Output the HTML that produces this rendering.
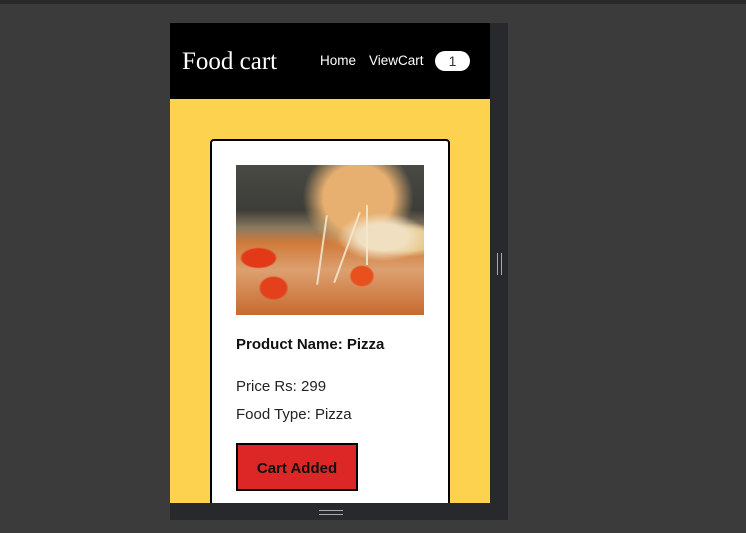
<!DOCTYPE html>
<html><head><style>
body{margin:0;width:746px;height:533px;background:#3b3b3b;position:relative;overflow:hidden;font-family:"Liberation Sans",sans-serif}
.top{position:absolute;left:0;top:0;width:746px;height:4px;background:#2a2a2a}
.frame{position:absolute;left:170px;top:23px;width:338px;height:497px;background:#28292c}
.vp{position:absolute;left:170px;top:23px;width:320px;height:480px;background:#fdd24e;overflow:hidden}
.hdr{position:absolute;left:0;top:0;width:320px;height:76px;background:#000}
.logo{position:absolute;left:12px;top:25px;color:#fff;font-family:"Liberation Serif",serif;font-size:25px}
.nav{position:absolute;top:30px;color:#fff;font-size:13.5px}
.badge{position:absolute;left:265px;top:28px;width:35px;height:20px;background:#fff;border-radius:10px;text-align:center;font-size:14px;line-height:20px;color:#333}
.card{position:absolute;left:40px;top:116px;width:236px;height:380px;background:#fff;border:2px solid #000;border-radius:4px}
.img{position:absolute;left:24px;top:24px;width:188px;height:150px;overflow:hidden;background:
radial-gradient(ellipse at 12% 62%,#e23a18 0 7%,transparent 8%),
radial-gradient(ellipse at 67% 74%,#e8501e 0 6%,transparent 7%),
radial-gradient(ellipse at 20% 82%,#e4401b 0 6%,transparent 7%),
radial-gradient(ellipse at 78% 48%,#f0dfc0 0 12%,transparent 22%),
radial-gradient(ellipse at 65% 22%,#e8b070 0 20%,transparent 32%),
radial-gradient(ellipse at 92% 50%,#e8c88a 0 10%,transparent 16%),
linear-gradient(180deg,#4a4a44 0,#3c3d38 30%,#8a7a60 42%,#d07a3a 52%,#dca070 70%,#c86a30 100%)}
.str{position:absolute;width:2px;background:#f3ead0;opacity:.85}
.t{position:absolute;left:24px;font-size:15px;color:#222}
.btn{position:absolute;left:24px;top:302px;width:118px;height:44px;background:#dd2626;border:2px solid #000;font-weight:bold;font-size:15px;text-align:center;line-height:48px;color:#111}
.sb{position:absolute;left:497px;top:253px;width:3px;height:22px;border-left:1px solid #aaa;border-right:1px solid #aaa}
.bb{position:absolute;left:319px;top:510px;width:24px;height:3px;border-top:1px solid #aaa;border-bottom:1px solid #aaa}
</style></head><body>
<div class="top"></div>
<div class="frame"></div>
<div class="vp">
<div class="hdr"><div class="logo">Food cart</div>
<div class="nav" style="left:150px">Home</div><div class="nav" style="left:199px">ViewCart</div>
<div class="badge">1</div></div>
<div class="card">
<div class="img">
<div class="str" style="left:85px;top:50px;height:70px;transform:rotate(8deg)"></div>
<div class="str" style="left:110px;top:45px;height:75px;transform:rotate(20deg)"></div>
<div class="str" style="left:130px;top:40px;height:60px"></div>
</div>
<div class="t" style="top:195px;font-weight:bold;color:#111">Product Name: Pizza</div>
<div class="t" style="top:237px">Price Rs: 299</div>
<div class="t" style="top:265px">Food Type: Pizza</div>
<div class="btn">Cart Added</div>
</div>
</div>
<div class="sb"></div><div class="bb"></div>
</body></html>
